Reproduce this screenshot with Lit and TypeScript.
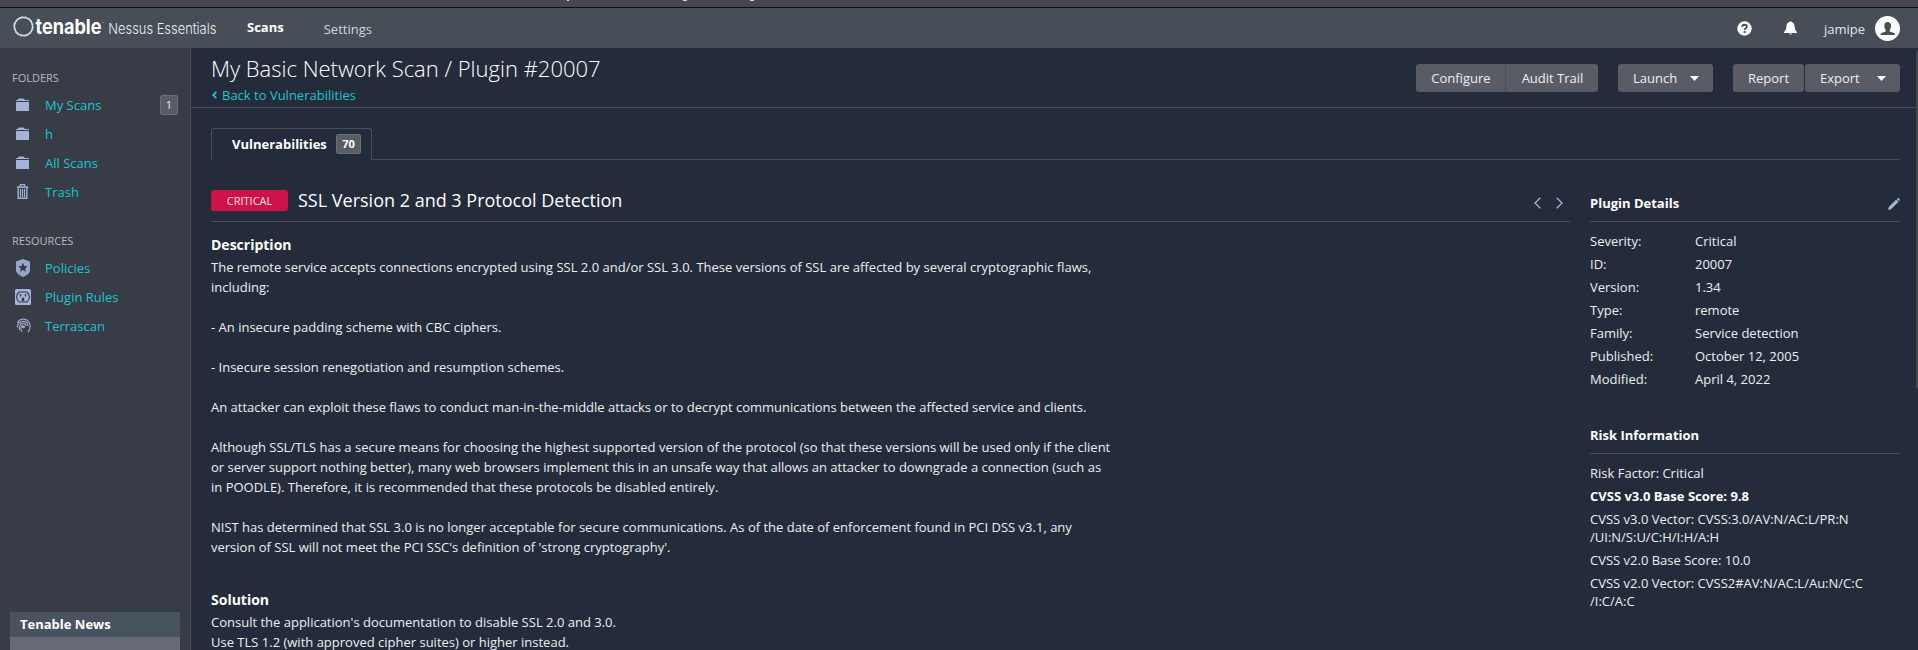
import { LitElement, html, css, svg } from "lit";
import { customElement } from "lit/decorators.js";

const folder = html`<svg class="ico" width="16" height="16" viewBox="0 0 16 16"><path fill="#a5b3d8" d="M1 3h2V2.200L4 1.500h4.500l1 .7V3H14v1.100H1zM1 5h13v9H1z"/></svg>`;
const trash = html`<svg class="ico" width="16" height="16" viewBox="0 0 16 16"><g fill="none" stroke="#a5b3d8"><path stroke-width="1.200" d="M5.300 2.500V.7h4.400v1.800"/><path stroke-width="1.600" d="M2 3.100h11"/><path stroke-width="1.400" d="M3.200 4v10.300h8.600V4"/><path stroke-width="1.100" d="M5.500 5v8M7.500 5v8M9.500 5v8"/></g></svg>`;
const shield = html`<svg class="ico" width="16" height="18" viewBox="0 0 16 18"><path fill="#98a5c6" d="M8 0 15 2.400V11c0 3.300-3.500 5.500-7 7-3.500-1.500-7-3.700-7-7V2.400z"/><path fill="#343b46" d="m8 3.800 1.350 3.100 3.350.3-2.540 2.200.76 3.300L8 10.950 5.080 12.700l.76-3.300L3.300 7.200l3.350-.3z"/></svg>`;
const plug = html`<svg class="ico" width="16" height="16" viewBox="0 0 16 16"><rect width="16" height="16" rx="1.500" fill="#a5b3d8"/><path fill="none" stroke="#343b46" stroke-width="1.100" d="M4.300 3h7.400a6 6 0 0 1 0 10H4.300a6 6 0 0 1 0-10z"/><path fill="none" stroke="#343b46" stroke-width="1.300" d="M5.500 5v2.500M10.500 5v2.500"/><path fill="#343b46" d="M6.700 12V9.900a1.300 1.300 0 0 1 2.600 0V12z"/></svg>`;
const terra = html`<svg class="ico" width="16" height="16" viewBox="0 0 16 16"><g fill="none" stroke="#98a5c6" stroke-width="1.200"><path d="M2.500 5C3.600 2.500 5.500 1.200 8.300 1.200c4.300 0 6.800 3.300 6.800 6.800 0 2.800-1 5-2.300 6.300"/><path d="M2.300 9.500C2.300 5.800 4.800 3.300 8 3.300c3 0 5 2 5 4.700"/><path d="M4.700 12C3.700 8.500 5 5.400 8 5.400c1.800 0 3 1.200 3 2.700"/><path d="M7.300 13.800C5.400 12.500 5.100 8 8 7.700"/></g><circle cx="8.500" cy="9" r="1.400" fill="#a5b3d8"/></svg>`;

@customElement("app-root")
export class AppRoot extends LitElement {
  static styles = css`
    :host { display: flex; flex-direction: column; width: 1918px; height: 650px; overflow: hidden; background: #242c3b; color: #eceef1; font: 13px/20px "Open Sans", "Noto Sans", sans-serif; }
    * { box-sizing: border-box; }
    svg { display: block; flex: none; }
    .strip { flex: none; height: 8px; background: #45464e; border-bottom: 1px solid #0d1117; display: flex; padding-left: 567px; }
    .strip i { height: 1px; background: #d5d6d8; width: 2px; margin-right: 114px; }
    .strip i + i { width: 4px; margin-right: 63px; }
    .top { flex: none; height: 40px; background: #474e57; display: flex; align-items: center; padding-right: 18px; }
    .logo { margin-left: 13px; width: 206px; overflow: visible; }
    .nav { display: flex; align-items: center; margin-left: 28px; gap: 40px; flex: 1; color: #d3d5d8; }
    .nav b { color: #fff; padding-bottom: 2px; }
    .nav span { padding-top: 2px; }
    .user { display: flex; align-items: center; color: #e4e6e8; }
    .user .q { margin-right: 31px; }
    .user .bell { margin-right: 26px; }
    .user .name { margin-right: 10px; padding-top: 2px; }
    .main { display: flex; flex: 1; min-height: 0; }
    .side { width: 191px; flex: none; background: #373c46; border-right: 1px solid #474e57; display: flex; flex-direction: column; padding-top: 20px; }
    .cap { font-size: 11px; color: #b7babf; margin-left: 12px; height: 20px; }
    .item { height: 29px; display: flex; align-items: center; color: #1fc3d1; padding: 0 12px 0 15px; }
    .items { padding-top: 2px; margin-bottom: 25px; }
    .ico { margin-right: 14px; }
    .item span { flex: 1; }
    .count { width: 18px; height: 20px; border: 1px solid #6c6e77; border-radius: 2px; background: #5a5c65; color: #eceef1; font-size: 11px; line-height: 18px; text-align: center; }
    .news { margin: auto 10px 0; height: 38px; background: #676975; }
    .news b { display: block; height: 25px; line-height: 25px; background: #485360; padding-left: 10px; color: #fff; }
    .content { flex: 1; min-width: 0; display: flex; flex-direction: column; }
    .head { height: 60px; border-bottom: 1px solid #474e57; padding: 5px 18px 0 20px; display: flex; justify-content: space-between; flex: none; }
    h1 { margin: 0; font-weight: 300; font-size: 22px; line-height: 30px; color: #fff; }
    .back { color: #1fc3d1; display: flex; align-items: center; height: 20px; margin-top: 2px; }
    .back svg { margin: 0 5px 0 1px; }
    .acts { display: flex; padding-top: 11px; }
    .btn { height: 28px; background: #5a5c65; border-radius: 3px; display: flex; align-items: center; justify-content: center; line-height: 28px; }
    .btn.drop { justify-content: space-between; padding: 0 14px 0 15px; width: 95px; }
    .conf { width: 90px; padding-left: 1px; border-radius: 3px 0 0 3px; border-right: 1px solid #474e57; }
    .audit { width: 92px; padding-left: 1px; border-radius: 0 3px 3px 0; margin-right: 20px; }
    .launch { margin-right: 20px; }
    .report { width: 71px; margin-right: 1px; }
    .tabs { margin: 20px 18px 0 20px; height: 32px; display: flex; flex: none; }
    .tab { width: 161px; border: 1px solid #474e57; border-bottom: 0; border-radius: 3px 3px 0 0; padding: 0 10px 1px 20px; display: flex; align-items: center; justify-content: space-between; font-weight: 700; color: #fff; }
    .tab em { font-style: normal; font-size: 11px; width: 25px; height: 20px; line-height: 18px; text-align: center; border: 1px solid #6c6e77; background: #5a5c65; border-radius: 2px; }
    .fill { flex: 1; border-bottom: 1px solid #474e57; }
    .cols { display: flex; padding: 20px 18px 0 20px; gap: 20px; }
    .left { width: 1359px; }
    .title { display: flex; height: 42px; border-bottom: 1px solid #474e57; padding: 10px 7px 10px 0; align-items: center; }
    .crit { width: 77px; height: 21px; line-height: 22px; background: #cd1348; border-radius: 3px; text-align: center; font-size: 11px; color: #fbe0e8; }
    .title h2 { margin: 0 0 0 10px; font-weight: 400; font-size: 18px; line-height: 24px; padding-bottom: 2px; flex: 1; color: #fff; }
    .arrows { display: flex; gap: 15px; padding-top: 5px; }
    h3 { margin: 0; font-size: 14px; line-height: 22px; padding-bottom: 1px; color: #fff; }
    .desc { padding-top: 12px; white-space: pre; }
    .sol { padding-top: 32px; white-space: pre; }
    .right { width: 310px; }
    .rh { display: flex; justify-content: space-between; align-items: center; height: 42px; border-bottom: 1px solid #474e57; padding-top: 4px; font-weight: 700; color: #fff; }
    .rh svg { margin-top: 2px; }
    .rows { padding-top: 8px; }
    .row { display: flex; height: 23px; line-height: 23px; }
    .row span { width: 105px; }
    .risk { padding-top: 10px; white-space: pre; line-height: 18px; }
    .risk div { margin-bottom: 5px; }
    .risk b { color: #fff; }
    .r2 { margin-top: 21px; }
    .thumb { position: absolute; left: 1916px; top: 50px; width: 2px; height: 339px; background: #41464f; border-radius: 2px 0 0 2px; }
  `;

  folders: [unknown, string, string][] = [
    [folder, "My Scans", "1"], [folder, "h", ""], [folder, "All Scans", ""], [trash, "Trash", ""],
  ];
  resources: [unknown, string, string][] = [
    [shield, "Policies", ""], [plug, "Plugin Rules", ""], [terra, "Terrascan", ""],
  ];
  details = [
    ["Severity:", "Critical"], ["ID:", "20007"], ["Version:", "1.34"], ["Type:", "remote"],
    ["Family:", "Service detection"], ["Published:", "October 12, 2005"], ["Modified:", "April 4, 2022"],
  ];
  description = `The remote service accepts connections encrypted using SSL 2.0 and/or SSL 3.0. These versions of SSL are affected by several cryptographic flaws,
including:

- An insecure padding scheme with CBC ciphers.

- Insecure session renegotiation and resumption schemes.

An attacker can exploit these flaws to conduct man-in-the-middle attacks or to decrypt communications between the affected service and clients.

Although SSL/TLS has a secure means for choosing the highest supported version of the protocol (so that these versions will be used only if the client
or server support nothing better), many web browsers implement this in an unsafe way that allows an attacker to downgrade a connection (such as
in POODLE). Therefore, it is recommended that these protocols be disabled entirely.

NIST has determined that SSL 3.0 is no longer acceptable for secure communications. As of the date of enforcement found in PCI DSS v3.1, any
version of SSL will not meet the PCI SSC's definition of 'strong cryptography'.`;
  solution = `Consult the application's documentation to disable SSL 2.0 and 3.0.
Use TLS 1.2 (with approved cipher suites) or higher instead.`;

  list(items: [unknown, string, string][]) {
    return html`<div class="items">${items.map(([icon, label, n]) => html`<div class="item">${icon}<span>${label}</span>${n ? html`<div class="count">${n}</div>` : ""}</div>`)}</div>`;
  }

  render() {
    const caret = html`<svg width="9" height="5" viewBox="0 0 9 5"><path fill="#fff" d="M0 0h9L4.500 5z"/></svg>`;
    return html`
      <div class="strip"><i></i><i></i><i></i></div>
      <header class="top">
        <svg class="logo" height="30" viewBox="0 0 206 30">
          <g fill="none" stroke="#dfe2e5" stroke-width=".8">
            ${[-8, 14, 36].map((a) => svg`<path transform="rotate(${a} 10.500 13.500)" d="M10.500 3.500 19.200 8.500V18.500L10.500 23.500 1.800 18.500V8.500z"/>`)}
          </g>
          <text x="22.500" y="21" textLength="66" lengthAdjust="spacingAndGlyphs" fill="#fff" font-family="Inter" font-weight="700" font-size="20.500">tenable</text>
          <circle cx="90" cy="9.500" r=".5" fill="#dfe2e5"/>
          <text x="95.300" y="21.200" textLength="108" lengthAdjust="spacingAndGlyphs" fill="#eceef0" font-family="Inter" font-weight="300" font-size="15">Nessus Essentials</text>
        </svg>
        <nav class="nav"><b>Scans</b><span>Settings</span></nav>
        <div class="user">
          <svg class="q" width="15" height="15" viewBox="0 0 15 15"><circle cx="7.500" cy="7.500" r="7.200" fill="#fff"/><path fill="none" stroke="#474e57" stroke-width="1.900" d="M5.200 5.700c.2-2.600 4.600-2.500 4.600 0 0 1.500-2.200 1.500-2.200 3.300M7.600 10v2"/></svg>
          <svg class="bell" width="15" height="14" viewBox="0 0 15 14"><path fill="#fff" d="M6.600 1.100a.9.900 0 0 1 1.800 0c2 .5 2.900 2 3.100 4 .3 3.100 1 4.600 2.500 5.900v.9H1V11c1.500-1.300 2.200-2.800 2.500-5.900.2-2 1.100-3.500 3.100-4zM6 12.500h3c-.3 1.300-2.700 1.300-3 0z"/></svg>
          <span class="name">jamipe</span>
          <svg width="25" height="25" viewBox="0 0 25 25"><circle cx="12.500" cy="12.500" r="12.500" fill="#fff"/><path fill="#474e57" d="M9.300 9.500C9.300 7.500 10.700 6 12.700 6s3.400 1.500 3.400 3.500c0 2-.6 3.400-1.400 4.500v1.400l4.300 1.700c.7.300 1 1 1 1.900H5.500c0-.9.300-1.600 1-1.900l4.200-1.700V14c-.9-1.100-1.400-2.500-1.400-4.500z"/></svg>
        </div>
      </header>
      <div class="main">
        <aside class="side">
          <div class="cap">FOLDERS</div>
          ${this.list(this.folders)}
          <div class="cap">RESOURCES</div>
          ${this.list(this.resources)}
          <div class="news"><b>Tenable News</b></div>
        </aside>
        <section class="content">
          <div class="head">
            <div>
              <h1>My Basic Network Scan / Plugin #20007</h1>
              <div class="back"><svg width="5" height="8" viewBox="0 0 5 8"><path fill="none" stroke="#1fc3d1" stroke-width="1.800" d="M4.300.8 1.200 4l3.100 3.200"/></svg>Back to Vulnerabilities</div>
            </div>
            <div class="acts">
              <div class="btn conf">Configure</div><div class="btn audit">Audit Trail</div>
              <div class="btn drop launch">Launch${caret}</div>
              <div class="btn report">Report</div><div class="btn drop">Export${caret}</div>
            </div>
          </div>
          <div class="tabs"><div class="tab">Vulnerabilities<em>70</em></div><div class="fill"></div></div>
          <div class="cols">
            <div class="left">
              <div class="title"><div class="crit">CRITICAL</div><h2>SSL Version 2 and 3 Protocol Detection</h2>
                <div class="arrows">
                  <svg width="7" height="12" viewBox="0 0 7 12"><path fill="none" stroke="#a5b3d8" stroke-width="1.300" d="M6.300.7 1 6l5.300 5.300"/></svg>
                  <svg width="7" height="12" viewBox="0 0 7 12"><path fill="none" stroke="#a5b3d8" stroke-width="1.300" d="M.7.7 6 6 .7 11.300"/></svg>
                </div></div>
              <div class="desc"><h3>Description</h3>${this.description}</div>
              <div class="sol"><h3>Solution</h3>${this.solution}</div>
            </div>
            <div class="right">
              <div class="rh">Plugin Details<svg width="12" height="12" viewBox="0 0 12 12"><path fill="#a5b3d8" d="m0 12 .8-3.100L8.200 1.500l2.300 2.300-7.400 7.400zM8.900.9l.6-.6c.4-.4.9-.4 1.300 0l.9.9c.4.400.4.900 0 1.300l-.6.6z"/></svg></div>
              <div class="rows">${this.details.map(([k, v]) => html`<div class="row"><span>${k}</span>${v}</div>`)}</div>
              <div class="rh r2">Risk Information</div>
              <div class="risk"><div>Risk Factor: Critical</div><div><b>CVSS v3.0 Base Score: 9.8</b></div><div>CVSS v3.0 Vector: CVSS:3.0/AV:N/AC:L/PR:N
/UI:N/S:U/C:H/I:H/A:H</div><div>CVSS v2.0 Base Score: 10.0</div><div>CVSS v2.0 Vector: CVSS2#AV:N/AC:L/Au:N/C:C
/I:C/A:C</div></div>
            </div>
          </div>
        </section>
      </div>
      <div class="thumb"></div>
    `;
  }
}
